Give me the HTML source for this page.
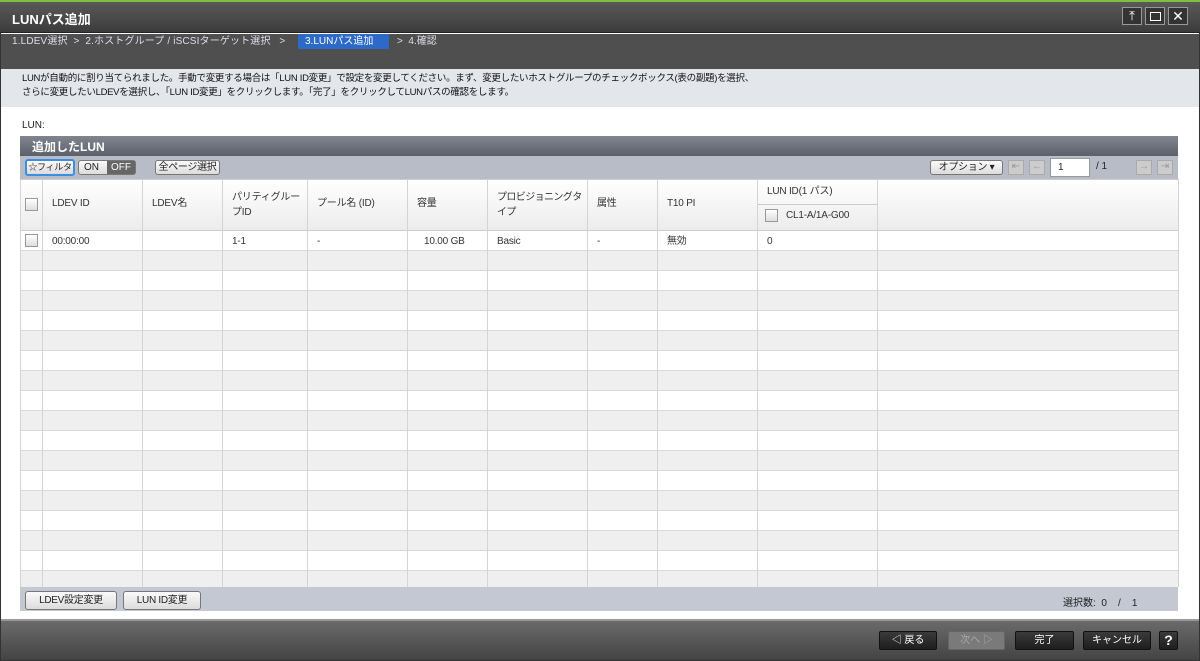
<!DOCTYPE html>
<html><head><meta charset="utf-8">
<style>
*{margin:0;padding:0;box-sizing:border-box}
body{width:1200px;height:661px;overflow:hidden;background:#fff;font-family:"Liberation Sans","Noto Sans CJK JP",sans-serif;font-size:11px;color:#222;position:relative}
.a{position:absolute;white-space:nowrap}
.btn{position:absolute;border:1px solid #777;border-radius:3px;background:linear-gradient(#fafafa,#dcdcdc);font-size:10px;text-align:center;color:#222;white-space:nowrap;letter-spacing:-0.3px}
.dbtn{position:absolute;border:1px solid #111;border-radius:2px;background:linear-gradient(#3a3a3a,#1e1e1e);color:#fff;font-size:10px;text-align:center;line-height:17px;white-space:nowrap}
.cb{position:absolute;width:13px;height:13px;border:1px solid #999;background:linear-gradient(#fff,#ddd)}
.vl{position:absolute;top:179px;height:408px;width:1px;background:#d4d4d4}
.hd{position:absolute;font-size:10px;line-height:13px;color:#333;white-space:nowrap;letter-spacing:-0.2px}
</style></head><body>
<div class="a" style="left:0;top:0;width:1200px;height:661px;border:1px solid #333;background:#fff"></div>
<div class="a" style="left:0;top:0;width:1200px;height:2px;background:#7ac143"></div>
<div class="a" style="left:0;top:2px;width:1200px;height:31px;background:linear-gradient(#5a5a5a,#3c3c3c);border-bottom:1px solid #222"></div>
<div class="a" style="left:12px;top:9px;color:#fff;font-weight:bold;font-size:13px">LUNパス追加</div>
<div class="a" style="left:1122px;top:7px;width:20px;height:18px;border:1px solid #999;background:#333;color:#fff;text-align:center;font-size:13px;line-height:15px">⤒</div>
<div class="a" style="left:1145px;top:7px;width:20px;height:18px;border:1px solid #999;background:#333"><div class="a" style="left:4px;top:4px;width:11px;height:9px;border:1px solid #fff"></div></div>
<div class="a" style="left:1168px;top:7px;width:20px;height:18px;border:1px solid #999;background:#333;color:#fff;text-align:center;font-size:14px;line-height:16px">✕</div>
<div class="a" style="left:1px;top:34px;width:1198px;height:35px;background:#4f4f4f"></div>
<div class="a" style="left:12px;top:35px;color:#dde;font-size:10px;line-height:14px;letter-spacing:0.15px">1.LDEV選択 &nbsp;&gt;&nbsp; 2.ホストグループ / iSCSIターゲット選択 &nbsp; &gt;</div>
<div class="a" style="left:298px;top:34px;width:91px;height:15px;background:#2d6ac8;color:#fff;padding-left:7px;line-height:15px;font-size:10px">3.LUNパス追加</div>
<div class="a" style="left:397px;top:35px;color:#dde;font-size:10px;line-height:14px">&gt;&nbsp; 4.確認</div>
<div class="a" style="left:1px;top:69px;width:1198px;height:38px;background:#e3e6ea"></div>
<div class="a" style="left:22px;top:72px;font-size:9.5px;line-height:14px;color:#111;letter-spacing:-0.3px">LUNが自動的に割り当てられました。手動で変更する場合は「LUN ID変更」で設定を変更してください。まず、変更したいホストグループのチェックボックス(表の副題)を選択、<br>さらに変更したいLDEVを選択し、「LUN ID変更」をクリックします。「完了」をクリックしてLUNパスの確認をします。</div>
<div class="a" style="left:22px;top:120px;font-size:10px">LUN:</div>
<div class="a" style="left:20px;top:136px;width:1158px;height:20px;background:linear-gradient(#808590,#5c606a);color:#fff;font-weight:bold;font-size:12px;padding:2px 0 0 12px">追加したLUN</div>
<div class="a" style="left:20px;top:156px;width:1158px;height:23px;background:#b8bcc6"></div>
<div class="btn" style="left:25px;top:159px;width:50px;height:17px;border:2px solid #3a8fe0;font-size:9px;line-height:13px">☆フィルタ</div>
<div class="btn" style="left:78px;top:160px;width:58px;height:15px"></div>
<div class="a" style="left:84px;top:161px;font-size:10px;line-height:13px">ON</div>
<div class="a" style="left:107px;top:161px;width:28px;height:13px;background:#666;color:#fff;font-size:10px;text-align:center;line-height:13px">OFF</div>
<div class="btn" style="left:155px;top:160px;width:65px;height:15px;line-height:13px">全ページ選択</div>
<div class="btn" style="left:930px;top:160px;width:73px;height:15px;line-height:13px">オプション ▾</div>
<div class="a" style="left:1008px;top:160px;width:16px;height:15px;border:1px solid #aaa;background:#ccc;color:#999;font-size:10px;text-align:center">⇤</div>
<div class="a" style="left:1029px;top:160px;width:16px;height:15px;border:1px solid #aaa;background:#ccc;color:#999;font-size:10px;text-align:center">←</div>
<div class="a" style="left:1050px;top:158px;width:40px;height:19px;background:#fff;border:1px solid #999;padding:3px 0 0 7px;font-size:10px">1</div>
<div class="a" style="left:1096px;top:161px;font-size:10px">/ 1</div>
<div class="a" style="left:1136px;top:160px;width:16px;height:15px;border:1px solid #aaa;background:#ccc;color:#999;font-size:10px;text-align:center">→</div>
<div class="a" style="left:1157px;top:160px;width:16px;height:15px;border:1px solid #aaa;background:#ccc;color:#999;font-size:10px;text-align:center">⇥</div>
<div class="a" style="left:20px;top:179px;width:1158px;height:52px;background:linear-gradient(#fff,#ececec);border-bottom:1px solid #ccc;border-top:1px solid #ccc"></div>
<div class="a" style="left:757px;top:204px;width:120px;height:1px;background:#ccc"></div>
<div id="rows"></div>
<script>
var h='';for(var i=0;i<18;i++){var y=231+i*20;h+='<div class="a" style="left:20px;top:'+y+'px;width:1158px;height:20px;background:'+(i%2?'#efefef':'#fff')+';border-bottom:1px solid #d8d8d8"></div>';}
[20,42,142,222,307,407,487,587,657,757,877,1178].forEach(function(x){h+='<div class="vl" style="left:'+x+'px"></div>';});
document.getElementById('rows').innerHTML=h;
</script>
<div class="cb" style="left:25px;top:198px"></div>
<div class="hd" style="left:52px;top:197px">LDEV ID</div>
<div class="hd" style="left:152px;top:197px">LDEV名</div>
<div class="hd" style="left:232px;top:190px;line-height:15px">パリティグルー<br>プID</div>
<div class="hd" style="left:317px;top:197px">プール名 (ID)</div>
<div class="hd" style="left:417px;top:197px">容量</div>
<div class="hd" style="left:497px;top:190px;line-height:15px;letter-spacing:-0.6px">プロビジョニングタ<br>イプ</div>
<div class="hd" style="left:597px;top:197px">属性</div>
<div class="hd" style="left:667px;top:197px">T10 PI</div>
<div class="hd" style="left:767px;top:185px">LUN ID(1 パス)</div>
<div class="cb" style="left:765px;top:209px"></div>
<div class="hd" style="left:786px;top:209px">CL1-A/1A-G00</div>
<div class="cb" style="left:25px;top:234px"></div>
<div class="hd" style="left:52px;top:235px">00:00:00</div>
<div class="hd" style="left:232px;top:235px">1-1</div>
<div class="hd" style="left:317px;top:235px">-</div>
<div class="hd" style="left:424px;top:235px">10.00 GB</div>
<div class="hd" style="left:497px;top:235px">Basic</div>
<div class="hd" style="left:597px;top:235px">-</div>
<div class="hd" style="left:667px;top:235px">無効</div>
<div class="hd" style="left:767px;top:235px">0</div>
<div class="a" style="left:20px;top:587px;width:1158px;height:24px;background:#c4c8d2"></div>
<div class="btn" style="left:25px;top:591px;width:92px;height:19px;line-height:17px">LDEV設定変更</div>
<div class="btn" style="left:123px;top:591px;width:78px;height:19px;line-height:17px">LUN ID変更</div>
<div class="a" style="left:1063px;top:594px;font-size:10px">選択数: &nbsp;0 &nbsp; &nbsp;/ &nbsp; &nbsp;1</div>
<div class="a" style="left:1px;top:619px;width:1198px;height:41px;background:linear-gradient(#6a6a6a,#444);border-top:2px solid #999"></div>
<div class="dbtn" style="left:879px;top:631px;width:58px;height:19px">◁ 戻る</div>
<div class="dbtn" style="left:948px;top:631px;width:57px;height:19px;background:#7a7a7a;color:#aaa;border-color:#666">次へ ▷</div>
<div class="dbtn" style="left:1015px;top:631px;width:59px;height:19px">完了</div>
<div class="dbtn" style="left:1083px;top:631px;width:68px;height:19px">キャンセル</div>
<div class="dbtn" style="left:1159px;top:631px;width:19px;height:19px;font-weight:bold;font-size:14px">?</div>
</body></html>
